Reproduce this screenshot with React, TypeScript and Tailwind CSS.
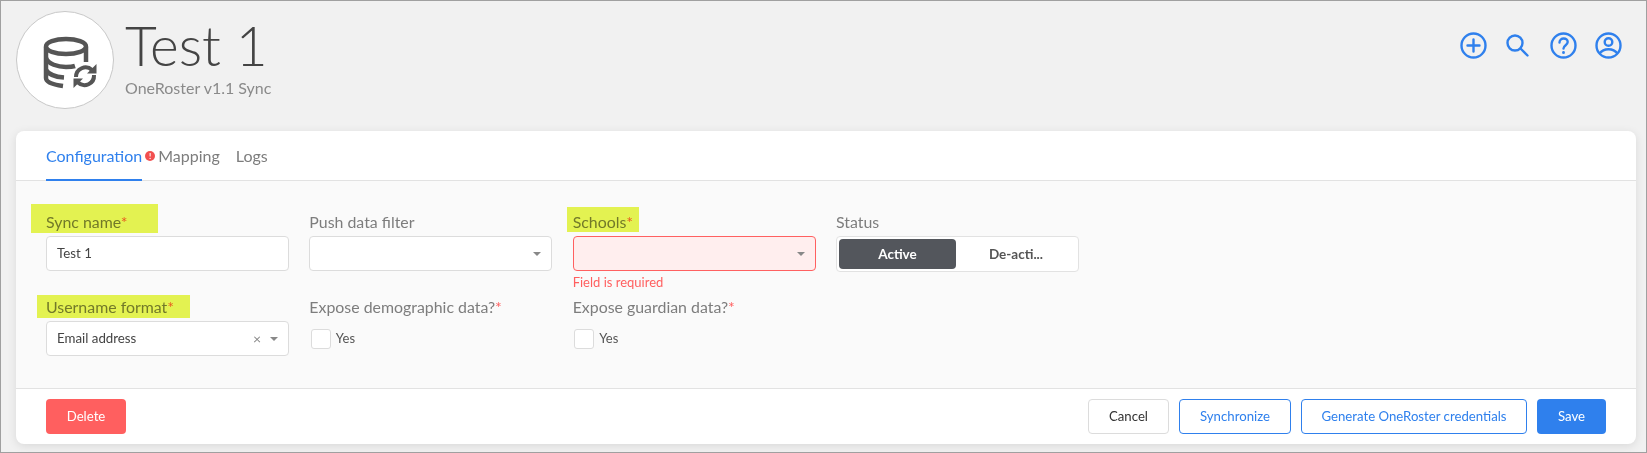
import React from 'react';

function Stars() {
  return <span className="text-[#ff5f5f]">*</span>;
}

function Caret() {
  return <span className="h-0 w-0 border-x-[4.500px] border-t-[4.500px] border-x-transparent border-t-[#888]" />;
}

function Field({ label, required, mark, children }: { label: string; required?: boolean; mark?: string; children: React.ReactNode }) {
  return (
    <div>
      <div className="relative mb-1 h-5 text-[15.900px] leading-5 text-[#7d7d7d]">
        {mark && <span className={`absolute bg-[#e6f73f] opacity-90 mix-blend-multiply ${mark}`} />}
        {label}
        {required && <Stars />}
      </div>
      {children}
    </div>
  );
}

function Check() {
  return (
    <div className="flex h-[35px] items-center pl-[1.5px]">
      <span className="h-5 w-5 rounded-[3px] border border-[#dcdcdc] bg-white" />
      <span className="ml-[5px] text-[13px] text-[#555]">Yes</span>
    </div>
  );
}

function DbIcon() {
  return (
    <svg viewBox="0 0 65 65" className="h-[65px] w-[65px]" fill="none" stroke="#555" strokeWidth="4.500">
      <ellipse cx="33" cy="18.500" rx="20" ry="7.500" />
      <path d="M13 19v31c0 4 6 6.500 17 8" />
      <path d="M53 19v15" />
      <path d="M13 30c2 6 12 9 20 9 3 0 6 0 9-1" />
      <path d="M13 42c3 5 11 7 18 7.500" />
      <path d="M43 49a9.500 9.500 0 0 1 16-7" strokeWidth="4" />
      <path d="M61 47a9.500 9.500 0 0 1-16 7.500" strokeWidth="4" />
      <path d="M54 45.500h9.500v-9.500z" fill="#555" stroke="none" />
      <path d="M50 50.500h-9.500v9.500z" fill="#555" stroke="none" />
    </svg>
  );
}

function PlusIcon() {
  return (
    <svg viewBox="0 0 27 27" className="h-[27px] w-[27px]" fill="none" stroke="#2f80ed" strokeWidth="2.400" strokeLinecap="round">
      <circle cx="13.500" cy="13.500" r="12" />
      <path d="M13.500 7.500v12M7.500 13.500h12" />
    </svg>
  );
}

function SearchIcon() {
  return (
    <svg viewBox="0 0 23 23" className="h-[23px] w-[23px]" fill="none" stroke="#2f80ed" strokeWidth="2.400" strokeLinecap="round">
      <circle cx="9" cy="9" r="7.500" />
      <path d="M14.500 14.500l7 7" />
    </svg>
  );
}

function HelpIcon() {
  return (
    <svg viewBox="0 0 27 27" className="h-[27px] w-[27px]" fill="none" stroke="#2f80ed" strokeWidth="2.400" strokeLinecap="round">
      <circle cx="13.500" cy="13.500" r="12" />
      <path d="M9.500 10.500c0-2.500 2-4 4.200-4s4 1.500 4 3.600c0 3-4.200 3.200-4.200 6.400" />
      <path d="M13.500 20.500v.2" strokeWidth="2.800" />
    </svg>
  );
}

function UserIcon() {
  return (
    <svg viewBox="0 0 27 27" className="h-[27px] w-[27px]" fill="none" stroke="#2f80ed" strokeWidth="2.400">
      <circle cx="13.500" cy="13.500" r="12" />
      <circle cx="13.500" cy="10" r="3.800" />
      <path d="M4.500 21.500c2.200-3 5.300-4.300 9-4.300s6.800 1.300 9 4.300" />
    </svg>
  );
}

export default function App() {
  return (
    <div className="h-[453px] w-[1647px] overflow-hidden border border-[#a0a0a0] bg-[#f1f1f1] font-['Lato',sans-serif]">
      {/* Header */}
      <div className="flex h-[130px] items-start pl-[15px] pr-[24px] pt-[10px]">
        <div className="flex h-[98px] w-[98px] items-center justify-center rounded-full border border-[#c8c8c8] bg-white">
          <DbIcon />
        </div>
        <div className="ml-[11px]">
          <div className="text-[55px] font-light leading-[68px] text-[#444]">Test 1</div>
          <div className="mt-[-1px] text-[16px] leading-5 text-[#8a8a8a]">OneRoster v1.1 Sync</div>
        </div>
        <div className="ml-auto mt-[21px] flex items-center">
          <PlusIcon />
          <span className="ml-[19.500px]"><SearchIcon /></span>
          <span className="ml-[20.500px]"><HelpIcon /></span>
          <span className="ml-[18.500px]"><UserIcon /></span>
        </div>
      </div>

      {/* Card */}
      <div className="ml-[15px] mr-[10px] h-[313px] overflow-hidden rounded-lg bg-white shadow-[0_2px_10px_rgba(0,0,0,0.1)]">
        <div className="flex h-[50px] items-stretch border-b border-[#e2e2e2] pl-[30px] text-[16px] text-[#7d7d7d]">
          <div className="flex h-[50px] items-center border-b-2 border-[#2f80ed] pt-[1px] text-[#2f80ed]">Configuration</div>
          <div className="ml-[3px] mr-[3px] flex items-center">
            <span className="flex h-[10px] w-[10px] items-center justify-center rounded-full bg-[#f25050] text-[8px] font-bold leading-none text-white">!</span>
          </div>
          <div className="flex items-center pt-[1px]">Mapping</div>
          <div className="ml-[16px] flex items-center pt-[1px]">Logs</div>
        </div>

        <div className="h-[208px] border-b border-[#e2e2e2] bg-[#fafafa] pl-[30px] pt-[31px]">
          <div className="grid grid-cols-[repeat(4,243px)] gap-x-[20.330px] gap-y-[5px]">
            <Field label="Sync name" required mark="-left-[15px] -top-[8px] h-[29px] w-[127px]">
              <div className="flex h-[35px] items-center rounded border border-[#dcdcdc] bg-white px-[10px] text-[13.300px] text-[#444]">Test 1</div>
            </Field>
            <Field label="Push data filter">
              <div className="flex h-[35px] items-center justify-end rounded border border-[#dcdcdc] bg-white pr-[10px]">
                <Caret />
              </div>
            </Field>
            <Field label="Schools" required mark="-left-[6px] -top-[5px] h-[25px] w-[72px]">
              <div className="flex h-[35px] items-center justify-end rounded border border-[#ff6060] bg-[#ffeeee] pr-[10px]">
                <Caret />
              </div>
              <div className="mt-px h-5 text-[13px] leading-5 text-[#ff5f5f]">Field is required</div>
            </Field>
            <Field label="Status">
              <div className="flex h-[36px] items-center rounded border border-[#e2e2e2] bg-white p-[2px]">
                <div className="flex h-[30px] w-[117px] items-center justify-center rounded bg-[#53565c] text-[13.500px] font-bold text-white">Active</div>
                <div className="flex flex-1 items-center justify-center text-[13.500px] font-bold text-[#555]">De-acti...</div>
              </div>
            </Field>

            <Field label="Username format" required mark="-left-[9px] -top-[2px] h-[23px] w-[153px]">
              <div className="flex h-[35px] items-center rounded border border-[#dcdcdc] bg-white pl-[10px] pr-[10px] text-[13.300px] text-[#444]">
                <span className="flex-1">Email address</span>
                <span className="mr-[9px] text-[14px] leading-none text-[#888]">×</span>
                <Caret />
              </div>
            </Field>
            <Field label="Expose demographic data?" required>
              <Check />
            </Field>
            <Field label="Expose guardian data?" required>
              <Check />
            </Field>
          </div>
        </div>

        <div className="flex h-[55px] items-start pl-[30px] pr-[30px] pt-[10px] text-[13.200px]">
          <button className="h-[35px] w-[80px] rounded bg-[#ff5f5f] text-white">Delete</button>
          <div className="ml-auto flex gap-[10px]">
            <button className="h-[35px] w-[81px] rounded border border-[#dcdcdc] bg-white text-[#333]">Cancel</button>
            <button className="h-[35px] w-[112px] rounded border border-[#2f80ed] bg-white text-[#2f80ed]">Synchronize</button>
            <button className="h-[35px] w-[226px] rounded border border-[#2f80ed] bg-white text-[#2f80ed]">Generate OneRoster credentials</button>
            <button className="h-[35px] w-[69px] rounded bg-[#2f80ed] text-white">Save</button>
          </div>
        </div>
      </div>
    </div>
  );
}
